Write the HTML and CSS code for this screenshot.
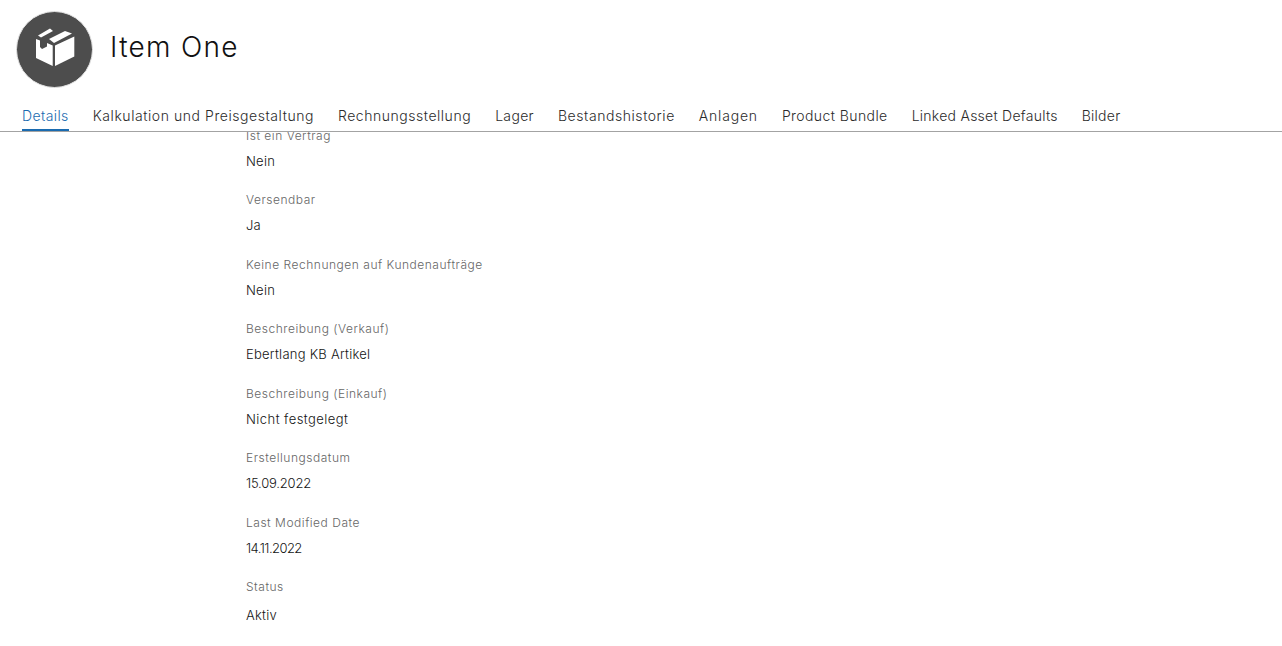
FILE: index.html
```html
<!DOCTYPE html>
<html lang="de">
<head>
<meta charset="utf-8">
<title>Item One</title>
<link rel="stylesheet" href="styles.css">
</head>
<body>
<div class="page">
  <header class="head">
    <div class="avatar">
      <svg class="box" viewBox="0 1 50 50" width="50" height="50" aria-hidden="true">
        <path fill="#fff" d="M25 22.5 44.3 13.5V33.5L25 43z"/>
        <path fill="#fff" d="M6 16 10 17.5V24L12 26 17 23.5V20L22.7 22.5V43L6 35z"/>
        <path fill="#fff" d="M8 12.5 20 5.5 23 8 11 14.5z"/>
        <path fill="#fff" d="M19 16 35 8 42 10.5 24 20z"/>
      </svg>
    </div>
    <h1 class="title">Item One</h1>
  </header>
  <nav class="tabs">
    <a class="tab active">Details</a>
    <a class="tab">Kalkulation und Preisgestaltung</a>
    <a class="tab tab-rechnung">Rechnungsstellung</a>
    <a class="tab tab-lager">Lager</a>
    <a class="tab">Bestandshistorie</a>
    <a class="tab tab-anlagen">Anlagen</a>
    <a class="tab tab-bundle">Product Bundle</a>
    <a class="tab tab-linked">Linked Asset Defaults</a>
    <a class="tab tab-bilder">Bilder</a>
  </nav>
  <main class="content">
    <div class="fields">
      <div class="field"><div class="label">Ist ein Vertrag</div><div class="value">Nein</div></div>
      <div class="field"><div class="label">Versendbar</div><div class="value">Ja</div></div>
      <div class="field"><div class="label">Keine Rechnungen auf Kundenaufträge</div><div class="value">Nein</div></div>
      <div class="field"><div class="label">Beschreibung (Verkauf)</div><div class="value">Ebertlang KB Artikel</div></div>
      <div class="field"><div class="label">Beschreibung (Einkauf)</div><div class="value wide">Nicht festgelegt</div></div>
      <div class="field"><div class="label">Erstellungsdatum</div><div class="value date">15.09.2022</div></div>
      <div class="field"><div class="label">Last Modified Date</div><div class="value date-narrow">14.11.2022</div></div>
      <div class="field last"><div class="label">Status</div><div class="value">Aktiv</div></div>
    </div>
  </main>
</div>
</body>
</html>
```
FILE: styles.css
```css
html, body { margin: 0; padding: 0; background: #fff; }
body { font-family: Inter, "Open Sans", sans-serif; color: #1c1c1c; font-weight: 350; }
.page { height: 646px; overflow: hidden; display: flex; flex-direction: column; }
.head { display: flex; align-items: center; gap: 17px; padding: 10px 16px 0; height: 78px; }
.avatar { width: 75px; height: 75px; border: 1.5px solid #e2e2e2; border-radius: 50%; background: #4d4d4d; display: flex; align-items: center; justify-content: center; flex: none; }
.box { display: block; }
.title { margin: -4px 0 0; font-size: 28px; font-weight: 350; color: #111; letter-spacing: 1.3px; }
.tabs { display: flex; gap: 24px; padding: 0 22px; margin-top: 15px; height: 28px; border-bottom: 1px solid #a3a3a3; flex: none; }
.tab { font-size: 14px; line-height: 26px; height: 26px; color: #2b2b2b; border-bottom: 2px solid transparent; letter-spacing: .56px; white-space: nowrap; }
.tab.active { color: #1a6bb0; border-bottom-color: #1a6bb0; letter-spacing: .4px; }
.tab.tab-rechnung { letter-spacing: .53px; }
.tab.tab-lager { letter-spacing: .33px; }
.tab.tab-anlagen { letter-spacing: .8px; }
.tab.tab-bundle { letter-spacing: .42px; }
.tab.tab-linked { letter-spacing: .26px; }
.tab.tab-bilder { letter-spacing: .25px; }
.content { flex: 1; overflow: hidden; padding-left: 246px; }
.fields { margin-top: -6px; }
.field { height: 64.5px; }
.label { font-size: 12px; line-height: 18px; padding-top: .5px; color: #666; letter-spacing: .52px; }
.value { font-size: 13px; line-height: 20px; margin-top: 6px; color: #141414; letter-spacing: .25px; }
.value.wide { letter-spacing: .45px; }
.value.date { letter-spacing: -.2px; }
.value.date-narrow { letter-spacing: -.55px; }
.last .value { margin-top: 8.5px; }
```
